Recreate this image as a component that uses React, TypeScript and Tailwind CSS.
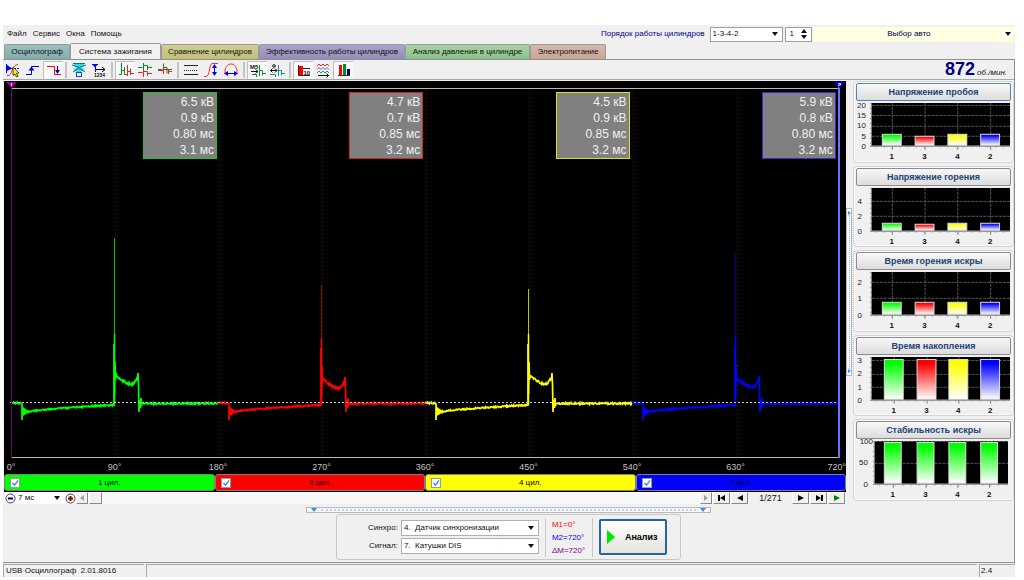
import React from 'react';

const TABS = [
  { label: 'Осциллограф', cls: 'w-[66px] bg-linear-to-b from-[#9cc0c0] to-[#7fadac]' },
  { label: 'Система зажигания', cls: 'w-[91px] bg-[#f1f1f1]', active: true },
  { label: 'Сравнение цилиндров', cls: 'w-[98px] bg-linear-to-b from-[#cfcf95] to-[#bfbf74]' },
  { label: 'Эффективность работы цилиндров', cls: 'w-[146px] bg-linear-to-b from-[#aaa4cc] to-[#938bba]' },
  { label: 'Анализ давления в цилиндре', cls: 'w-[125px] bg-linear-to-b from-[#a8d2a4] to-[#8ac389]' },
  { label: 'Электропитание', cls: 'w-[76px] bg-linear-to-b from-[#d6b9ac] to-[#c8a595]' },
];

const CYLINDERS = [
  { n: 1, color: '#00ff00', bg: 'bg-[#00ff00]', box: 'left-[16.5%] border-[#22c322]', values: ['6.5 кВ', '0.9 кВ', '0.80 мс', '3.1 мс'], top: 238, burn: 374, dim: 0.75 },
  { n: 3, color: '#ff0000', bg: 'bg-[#ff0000]', box: 'left-[41%] border-[#d22222]', values: ['4.7 кВ', '0.7 кВ', '0.85 мс', '3.2 мс'], top: 285, burn: 378, dim: 0.6 },
  { n: 4, color: '#ffff00', bg: 'bg-[#ffff00]', box: 'left-[65.5%] border-[#e0e022]', values: ['4.5 кВ', '0.9 кВ', '0.85 мс', '3.2 мс'], top: 289, burn: 374, dim: 0.75 },
  { n: 2, color: '#0000ff', bg: 'bg-[#0000ff]', box: 'left-[90%] border-[#3030c8]', values: ['5.9 кВ', '0.8 кВ', '0.80 мс', '3.2 мс'], top: 253, burn: 377, dim: 0.6 },
];

const BAR_COLORS = ['#00ff00', '#ff0000', '#ffff00', '#0000ff'];

type ChartDef = {
  title: string;
  max: number;
  ticks: number[];
  values: number[];
  colors: string[];
  left: number;
  labelX: number;
  barWidth: number;
  centers: number[];
};

const CHARTS: ChartDef[] = [
  { title: 'Напряжение пробоя', max: 21, ticks: [0, 5, 10, 15, 20], values: [6.1, 4.7, 5.7, 6], colors: BAR_COLORS, left: 16, labelX: 10, barWidth: 20, centers: [36, 69, 102, 135] },
  { title: 'Напряжение горения', max: 5.7, ticks: [0, 2, 4], values: [1.1, 0.95, 1.1, 1.1], colors: BAR_COLORS, left: 16, labelX: 6, barWidth: 20, centers: [36, 69, 102, 135] },
  { title: 'Время горения искры', max: 2.6, ticks: [0, 1, 2], values: [0.77, 0.77, 0.81, 0.77], colors: BAR_COLORS, left: 16, labelX: 6, barWidth: 20, centers: [36, 69, 102, 135] },
  { title: 'Время накопления', max: 3.25, ticks: [0, 1, 2, 3], values: [3.1, 3.12, 3.12, 3.12], colors: BAR_COLORS, left: 16, labelX: 6, barWidth: 20, centers: [38, 71, 103, 135] },
  { title: 'Стабильность искры', max: 100, ticks: [0, 50, 100], values: [98, 98, 98, 98], colors: ['#00ff00', '#00ff00', '#00ff00', '#00ff00'], left: 19, labelX: 12, barWidth: 18, centers: [37, 70, 102, 134] },
];

const noise = (i: number) => {
  const v = Math.sin(i * 12.9898) * 43758.5453;
  return v - Math.floor(v) - 0.5;
};

// One 180° section of the secondary voltage trace, starting at x0
const buildTrace = (x0: number, burn: number) => {
  const pts: string[] = [];
  const add = (x: number, y: number) => pts.push(`${(x0 + x).toFixed(1)},${y.toFixed(1)}`);
  for (let x = 0; x <= 10; x += 0.5) add(x, 403 + noise(x + 3) * 1.5);
  add(11, 404);
  add(11, 420);
  for (let x = 11.5; x < 18; x += 0.5) {
    const swing = (18 - x) * 0.7;
    add(x, 411.5 + (Math.round(x * 2) % 2 ? -swing : swing));
  }
  for (let x = 18; x <= 102; x += 0.5) {
    const t = (x - 18) / 84;
    add(x, 411.5 - 6.5 * Math.pow(t, 0.75) + noise(x + x0) * 1.4);
  }
  add(103, 405);
  add(103, burn - 30);
  add(103.5, burn + 20);
  add(104, burn - 12);
  add(104.5, burn + 6);
  for (let x = 105; x <= 126.5; x += 0.5) {
    const t = (x - 105) / 22;
    const y = t < 0.72 ? burn + 1 + 9 * Math.sin((t / 0.72) * 1.57) : burn + 10 - 7 * Math.pow((t - 0.72) / 0.28, 1.5);
    add(x, y + noise(x * 3 + x0) * 2.2);
  }
  add(127, burn - 1);
  add(127.5, burn + 10);
  add(128, 412);
  add(128.5, 400);
  add(129.5, 408);
  add(130, 398);
  add(130.5, 406);
  for (let x = 131; x <= 207; x += 0.5) add(x, 403.5 + noise(x * 2 + x0) * 1.6);
  return pts.join(' ');
};

const Arrow: React.FC<{ className?: string }> = ({ className = '' }) => (
  <svg viewBox="0 0 6 4" className={`h-1 w-[6px] ${className}`} aria-hidden="true">
    <path d="M0 0h6L3 4z" fill="currentColor" />
  </svg>
);

type SelectProps = { id: string; options: string[]; className?: string; label?: string };

const Select: React.FC<SelectProps> = ({ id, options, className = '', label }) => (
  <div className={`relative bg-white ${className}`}>
    <select id={id} aria-label={label} className="block h-full w-full appearance-none bg-transparent pr-3 pl-[2px] outline-none">
      {options.map((o) => (
        <option key={o}>{o}</option>
      ))}
    </select>
    <Arrow className="pointer-events-none absolute top-1/2 right-1 -translate-y-1/2" />
  </div>
);

const ICONS: { name: string; art: React.ReactNode; pressed?: boolean }[][] = [
  [
    {
      name: 'Курсор',
      art: (
        <>
          <path d="M2 3l5 3.500L2 9z" fill="#0000ff" />
          <path d="M1.500 2v9" stroke="#0000ff" />
          <path d="M6 6.500h8" stroke="#0000ff" strokeDasharray="2 1" />
          <path d="M2 13.500c3 .5 4-2 5-5s3-6 6-6" stroke="#ff2020" fill="none" />
          <path d="M8 5l6 6-2.500.3 1.500 3-1.500.7-1.500-3L8 13.500z" fill="#ffee00" stroke="#222" strokeWidth=".8" />
        </>
      ),
    },
    {
      name: 'Фронт',
      art: (
        <>
          <path d="M1 12.500h5.500v-8H14" stroke="#0000d8" fill="none" />
          <path d="M3.500 8.500h6l-3-4z" fill="#0000d8" />
        </>
      ),
    },
    {
      name: 'Спад',
      pressed: true,
      art: (
        <>
          <path d="M1 4.500h7.500v8H15" stroke="#ff0000" fill="none" />
          <path d="M11.500 4v5" stroke="#0000d8" />
          <path d="M9 8h5l-2.500 4z" fill="#0000d8" />
        </>
      ),
    },
  ],
  [
    {
      name: 'Датчик',
      art: (
        <>
          <path d="M2 3c3-2 9-2 12 0L10 6H6zM2 8l4-3h4l4 3-4 2H6z" fill="#30d8e0" />
          <path d="M1 3l6 2 7 5M15 3L9 5l-7 5M2 1.500h12" stroke="#007a80" fill="none" />
          <path d="M5.500 10v5M10.500 10v5M5 10.500h6M5 14.500h6" stroke="#2040e0" />
        </>
      ),
    },
    {
      name: 'Метки',
      art: (
        <>
          <path d="M1 2h6L4 5.500z" fill="#0000ff" />
          <path d="M4.500 2v8M1 2.500h6" stroke="#0000ff" />
          <path d="M5 7.500h9M11 5l3 2.500L11 10" stroke="#000" fill="none" />
          <text x="3" y="15" fontSize="5" fontWeight="bold" fill="#111">1234</text>
        </>
      ),
    },
  ],
  [
    {
      name: 'Парад',
      pressed: true,
      art: (
        <>
          <path d="M1 12.500h2.500V1V8.500h3V12.500V5" stroke="#008c20" fill="none" />
          <path d="M6.500 12.500h2.500M9.500 14V3v6.500h3V13V6.500M12.500 11.500H16" stroke="#f02020" fill="none" />
        </>
      ),
    },
    {
      name: 'Растр',
      art: (
        <>
          <path d="M1 5.500h4.500M6.500 1v8M6.500 3.500h4v4.500M10.500 5.500H15" stroke="#008c20" fill="none" />
          <path d="M1 10.500h4.500M6.500 7v8M6.500 9.500h4V14M10.500 11.500H15" stroke="#f02020" fill="none" />
        </>
      ),
    },
    {
      name: 'Наложение',
      art: (
        <>
          <path d="M1 7.500h4.500M6.500 1.500v9M6.500 5.500h3.500v6M10.500 7.500H15" stroke="#008c20" fill="none" />
          <path d="M1 8.500h5.500V4v8M6.500 7.500h5V12M11.500 9.500H15" stroke="#f02020" fill="none" />
        </>
      ),
    },
  ],
  [
    {
      name: 'Линии',
      art: (
        <>
          <path d="M1 3.500h14M1 12.500h14" stroke="#222" />
          <path d="M1 8.500h14" stroke="#222" strokeDasharray="1 1" />
        </>
      ),
    },
    {
      name: 'По амплитуде',
      art: (
        <>
          <path d="M1 14.500h2c4 0 3-12 6-13h6" stroke="#ff3030" fill="none" />
          <path d="M11.500 3v10" stroke="#0000ff" />
          <path d="M9 6l2.500-4L14 6zM9 10l2.500 4L14 10z" fill="#0000ff" />
        </>
      ),
    },
    {
      name: 'По периоду',
      art: (
        <>
          <path d="M2 12V8c1-4 3-6 6-6s5 2 6 6v4" stroke="#ff3030" fill="none" />
          <path d="M3 11.500h10" stroke="#0000ff" />
          <path d="M1 11.500L5 9v5zM15 11.500L11 9v5z" fill="#0000ff" />
        </>
      ),
    },
  ],
  [
    {
      name: 'Значения',
      pressed: true,
      art: (
        <>
          <path d="M2 12.500h4.500V15M9.500 14V3v5.500h3v5M12.500 11.500H16" stroke="#109030" fill="none" />
          <text x="0" y="7" fontSize="6" fontWeight="bold" fill="#111">M5</text>
          <path d="M1 9.500h7M5.500 7.500l2.500 2-2.500 2" stroke="#111" fill="none" />
        </>
      ),
    },
    {
      name: 'Измерение',
      art: (
        <>
          <path d="M1 12.500h5.500V15M9.500 14V3v5.500h3v5M12.500 11.500H16" stroke="#169090" fill="none" />
          <path d="M1 8.500h7M3.500 6.500l-2 2 2 2M6 6.500l2 2-2 2" stroke="#111" fill="none" />
          <circle cx="5" cy="4" r="1.300" stroke="#111" fill="none" />
        </>
      ),
    },
  ],
  [
    {
      name: 'Цифры',
      pressed: true,
      art: (
        <>
          <path d="M3 4h4v9H3z" fill="#ff0000" />
          <path d="M2.500 3v10.500H14M7 6.500h7" stroke="#222" fill="none" />
          <text x="7.500" y="12.500" fontSize="6" fontWeight="bold" fill="#111">10</text>
        </>
      ),
    },
    {
      name: 'Осциллограммы',
      art: (
        <>
          <path d="M2 4l2-2 2 2 2-2 2 2 2-2 2 2" stroke="#ff2020" fill="none" />
          <path d="M2 7.500l2-2 2 2 2-2 2 2 2-2 2 2" stroke="#6060ff" fill="none" />
          <path d="M2 11l2-2 2 2 2-2 2 2 2-2 2 2" stroke="#20a040" fill="none" />
          <path d="M3 13.500h11M11.500 11.500l2 2-2 2" stroke="#111" fill="none" />
        </>
      ),
    },
    {
      name: 'Диаграммы',
      pressed: true,
      art: (
        <>
          <path d="M3 3h3v10H3z" fill="#ff0000" />
          <path d="M7 2h3v11H7z" fill="#008c20" />
          <path d="M11 7h3v6h-3z" fill="#000080" />
          <path d="M2 13.500h12" stroke="#333" />
        </>
      ),
    },
  ],
];

const Toolbar: React.FC = () => (
  <div className="flex h-5 items-center border-b border-[#a8a8a8]">
    {ICONS.map((group, i) => (
      <React.Fragment key={i}>
        {i > 0 && <span className="mx-[2px] h-4 w-[2px] border-x border-x-[#c4c4c4] bg-white" />}
        {group.map((icon) => (
          <button
            key={icon.name}
            type="button"
            aria-label={icon.name}
            className={`flex h-[18px] w-5 items-center justify-center ${icon.pressed ? 'border-t border-l border-[#c0c0c0] bg-[#f9f9f9]' : ''}`}
          >
            <svg viewBox="0 0 16 16" className="h-4 w-4" aria-hidden="true">
              {icon.art}
            </svg>
          </button>
        ))}
      </React.Fragment>
    ))}
    <div className="ml-auto flex items-baseline gap-[2px] pr-[7px]">
      <span className="text-[18px] leading-[18px] font-bold text-[#000080]">872</span>
      <span className="italic">об./мин.</span>
    </div>
  </div>
);

const BarChart: React.FC<{ chart: ChartDef; id: number }> = ({ chart, id }) => {
  const right = chart.left === 16 ? 155 : 153;
  const y = (v: number) => 44 - (v / chart.max) * 43;
  const minor = Array.from({ length: 17 }, (_, i) => chart.left + 4 + i * 8);
  return (
    <svg viewBox="0 0 156 60" className="block w-full overflow-visible" role="img" aria-label={chart.title}>
      <defs>
        {chart.colors.map((c, i) => (
          <linearGradient key={i} id={`bar-${id}-${i}`} x1="0" y1="0" x2="0" y2="1">
            <stop offset="0.1" stopColor={c} />
            <stop offset="1" stopColor="#ffffff" />
          </linearGradient>
        ))}
      </defs>
      <rect x={chart.left} y="1" width={right - chart.left} height="43" fill="#000" />
      {chart.ticks.slice(1).map((t) => (
        <path key={t} d={`M${chart.left} ${Math.round(y(t)) + 0.5}H${right}`} stroke="#555" strokeDasharray="3 1" />
      ))}
      {chart.centers.map((c) => (
        <path key={c} d={`M${c + 0.5} 1v43`} stroke="#555" strokeDasharray="3 1" />
      ))}
      {Array.from({ length: 9 }, (_, i) => (
        <path key={i} d={`M${chart.left - 2} ${1.5 + i * 5}h2`} stroke="#999" />
      ))}
      <path d={`M${chart.left - 2} 44.500H${right}M${chart.left - 0.5} 1v43`} stroke="#777" />
      {minor.map((x) => (
        <path key={x} d={`M${x + 0.5} 45v1`} stroke="#999" />
      ))}
      {chart.centers.map((c) => (
        <path key={c} d={`M${c + 0.5} 45v3`} stroke="#777" />
      ))}
      {chart.values.map((v, i) => (
        <rect
          key={i}
          x={chart.centers[i] - chart.barWidth / 2 + 0.5}
          y={Math.round(y(v)) + 0.5}
          width={chart.barWidth - 1}
          height={43 - Math.round(y(v))}
          fill={`url(#bar-${id}-${i})`}
          stroke="#ddd"
        />
      ))}
      {chart.ticks.map((t) => (
        <text key={t} x={t === 100 ? 17 : chart.labelX} y={y(t) + 3} textAnchor="end" fontSize="8" fill="#222">
          {t}
        </text>
      ))}
      {[1, 3, 4, 2].map((n, i) => (
        <text key={n} x={chart.centers[i]} y="57" textAnchor="middle" fontSize="8" fontWeight="bold" fill="#111">
          {n}
        </text>
      ))}
    </svg>
  );
};

const Scope: React.FC = () => (
  <div className="relative flex flex-1 flex-col overflow-hidden bg-black">
    <svg viewBox="4 81 842 378" preserveAspectRatio="none" className="block h-0 min-h-[300px] w-full flex-1" role="img" aria-label="Осциллограмма">
      {[114, 218, 321, 425, 528, 632, 736].map((x) => (
        <path key={x} d={`M${x + 1}.500 89v368`} stroke="#2c2c18" strokeDasharray="1 3" />
      ))}
      <path d="M11 88.500h829M11 457.500h829" stroke="#b8b8b8" />
      {CYLINDERS.map((c, i) => {
        const x0 = 11 + i * 207;
        return (
          <g key={c.n} fill="none" stroke={c.color}>
            <path d={`M${x0 + 103.5} ${c.top}V${c.burn}`} strokeOpacity={c.dim} />
            <path d={`M${x0 + 103.5} ${c.burn - 40}V405`} strokeWidth="1.500" />
            <polyline points={buildTrace(x0, c.burn)} strokeWidth="1.700" />
          </g>
        );
      })}
      <path d="M10 402.500h830" stroke="#c8c8c8" strokeDasharray="2 2" />
      <path d="M11.500 82v376" stroke="#700070" />
      <path d="M839 82v376" stroke="#7070ff" strokeWidth="2" />
      <path d="M6 82h11l-5.500 6z" fill="#a000a0" />
      <path d="M834 82h11l-5.500 6z" fill="#0000ff" />
      <path d="M11.500 83v3M838.500 83.500h2v1.500h-2v1" stroke="#fff" fill="none" />
    </svg>
    <div className="flex h-[15px] items-center justify-between px-[7px] text-[9px] text-[#c0c0c0]">
      {[0, 90, 180, 270, 360, 450, 540, 630].map((d) => (
        <span key={d} className="flex w-0 justify-center">{d}°</span>
      ))}
      <span className="-mr-[7px] flex w-[7px] justify-end">720°</span>
    </div>
    <div className="grid h-[18px] grid-cols-4 pb-px">
      {CYLINDERS.map((c) => (
        <label key={c.n} className={`grid grid-cols-[10px_1fr_10px] items-center rounded-[3px] border border-[#808080] px-[5px] text-black ${c.bg}`}>
          <input type="checkbox" defaultChecked className="col-start-1 row-start-1 h-[10px] w-[10px] appearance-none border border-[#9a9a9a] bg-white" />
          <svg viewBox="0 0 10 10" className="pointer-events-none col-start-1 row-start-1 h-[10px] w-[10px]" aria-hidden="true">
            <path d="M2.500 5l2 2.300 3.500-5" fill="none" stroke="#2a8be8" strokeWidth="1.300" />
          </svg>
          <span className="text-center">{c.n} цил.</span>
        </label>
      ))}
    </div>
    {CYLINDERS.map((c) => (
      <div key={c.n} className={`absolute top-[11px] w-[74px] border bg-[#808080] pt-px pr-[2px] text-right text-[12px] leading-4 text-[#f0f0f0] ${c.box}`}>
        {c.values.map((v, i) => (
          <div key={i}>{v}</div>
        ))}
      </div>
    ))}
  </div>
);

const NavButton: React.FC<{ label: string; d: string; className?: string }> = ({ label, d, className = 'w-[17px] text-black' }) => (
  <button type="button" aria-label={label} className={`mr-px flex h-3 items-center justify-center border border-t-white border-r-[#888] border-b-[#888] border-l-white bg-[#f0f0f0] ${className}`}>
    <svg viewBox="0 0 10 8" className="h-2 w-[10px]" aria-hidden="true">
      <path d={d} fill="currentColor" />
    </svg>
  </button>
);

const ZoomButton: React.FC<{ label: string; d: string; color: string }> = ({ label, d, color }) => (
  <button type="button" aria-label={label} className="flex h-3 w-3 items-center justify-center">
    <svg viewBox="0 0 11 11" className="h-[11px] w-[11px]" aria-hidden="true">
      <circle cx="5.500" cy="5.500" r="4.500" fill="#fff" stroke="#444" />
      <path d={d} stroke={color} strokeWidth="2" />
    </svg>
  </button>
);

const ScrollRow: React.FC = () => (
  <div className="flex h-3 items-center bg-[#f8f8f8]">
    <ZoomButton label="Уменьшить" d="M3 5.500h5" color="#000080" />
    <Select id="sweep" label="Развёртка" options={['7 мс', '10 мс', '20 мс']} className="h-3 w-12" />
    <ZoomButton label="Увеличить" d="M3 5.500h5M5.500 3v5" color="#900000" />
    <NavButton label="Влево" d="M7 1v6L3 4z" className="w-3 text-[#a0a0a0]" />
    <div className="h-3 w-[13px] border border-t-white border-r-[#888] border-b-[#888] border-l-white bg-[#f0f0f0]" />
    <div className="flex-1" />
    <NavButton label="Вправо" d="M3 1v6l4-3z" className="w-3 text-[#a0a0a0]" />
    <NavButton label="В начало" d="M1 1h2v6H1zM8 1v6L3 4z" />
    <NavButton label="Назад" d="M8 1v6L2 4z" />
    <span className="h-3 w-[43px] bg-[#f0f0f0] text-center text-[9px] leading-3">1/271</span>
    <NavButton label="Вперёд" d="M2 1v6l6-3z" />
    <NavButton label="В конец" d="M7 1h2v6H7zM2 1v6l5-3z" />
    <NavButton label="Воспроизвести" d="M2 1v6l6-3z" className="w-[17px] text-[#008000]" />
  </div>
);

const Sidebar: React.FC = () => (
  <aside className="flex w-[161px] flex-col gap-[3px]">
    {CHARTS.map((chart, i) => (
      <section key={chart.title} className="rounded-[4px] border border-[#d4d4d4] px-[2px] shadow-[inset_0_0_0_1px_#fafafa]">
        <button
          type="button"
          className={`mt-px block h-[18px] w-full rounded-[2px] border bg-linear-to-b from-[#f8f8f8] to-[#dcdcdc] text-center text-[9px] font-bold text-[#1c4474] ${i === 0 ? 'border-[#5684b0]' : 'border-[#8c8c8c]'}`}
        >
          {chart.title}
        </button>
        <div className="pt-px">
          <BarChart chart={chart} id={i} />
        </div>
      </section>
    ))}
  </aside>
);

const App: React.FC = () => {
  return (
    <div className="flex min-h-screen flex-col bg-white pt-[25px] pr-[9px] pb-[3px] pl-[3px] font-['Liberation_Sans',Arial,sans-serif] text-[8px] leading-[12px] text-[#111]">
      <div className="flex flex-1 flex-col bg-[#f0f0f0]">
        <header className="flex h-[18px] items-center">
          <nav className="flex gap-[6px] pl-1">
            {['Файл', 'Сервис', 'Окна', 'Помощь'].map((m) => (
              <button key={m} type="button">{m}</button>
            ))}
          </nav>
          <label htmlFor="order" className="mr-[5px] ml-auto text-[#00008c]">Порядок работы цилиндров</label>
          <Select id="order" options={['1-3-4-2', '1-2-4-3']} className="h-[15px] w-[73px] border border-[#a0a0a0]" />
          <div className="ml-[2px] flex h-[15px] w-[27px] items-center border border-[#a0a0a0] bg-white">
            <input aria-label="Номер" defaultValue="1" className="w-3 flex-1 bg-transparent pl-1 outline-none" />
            <div className="flex flex-col gap-[2px] pr-1">
              <button type="button" aria-label="Больше" className="block h-1"><Arrow className="block rotate-180" /></button>
              <button type="button" aria-label="Меньше" className="block h-1"><Arrow className="block" /></button>
            </div>
          </div>
          <button type="button" className="ml-px flex h-[15px] w-[20%] items-center bg-[#ffffe1] pr-1 text-[#00004c]">
            <span className="flex-1 text-center">Выбор авто</span>
            <Arrow />
          </button>
        </header>

        <div role="tablist" className="flex h-4 items-end pl-px">
          {TABS.map((t) => (
            <button
              key={t.label}
              type="button"
              role="tab"
              aria-selected={!!t.active}
              className={`rounded-t-[2px] border border-b-0 border-[#9a9a9a] text-center whitespace-nowrap ${t.active ? 'h-4' : 'h-[15px]'} ${t.cls}`}
            >
              {t.label}
            </button>
          ))}
        </div>

        <main className="flex flex-1 flex-col border-t border-r border-b border-[#909090]">
          <Toolbar />
          <div className="flex flex-1 pt-px">
            <div className="flex flex-1 flex-col pl-px">
              <Scope />
              <ScrollRow />
            </div>
            <div className="flex w-[7px] flex-col justify-center pr-px">
              <div className="mb-[2px] flex h-[168px] flex-col items-center justify-between border border-[#b8b8b8] bg-[#f8f8f8] py-[2px]">
                <svg viewBox="0 0 3 4" className="h-1 w-[3px]" aria-hidden="true"><path d="M0 0v4l3-2z" fill="#3090f0" /></svg>
                <div className="w-0 flex-1 border-l border-dotted border-[#90bcec]" />
                <svg viewBox="0 0 3 4" className="h-1 w-[3px]" aria-hidden="true"><path d="M0 0v4l3-2z" fill="#3090f0" /></svg>
              </div>
            </div>
            <Sidebar />
          </div>

          <div className="flex flex-col items-center pt-[3px] pb-[2px]">
            <div className="flex h-[6px] w-2/5 items-center gap-1 border border-[#b8b8b8] bg-[#f8f8f8] px-1 text-[#3090f0]">
              <Arrow />
              <div className="h-0 flex-1 border-t-2 border-dotted border-[#b4d2f2]" />
              <Arrow />
            </div>
            <div className="mt-px flex h-[46px] items-center rounded-[3px] border border-[#c8c8c8] pr-[13px] pl-[31px]">
              <div className="grid grid-cols-[auto_138px] items-center gap-x-[3px] gap-y-[2px]">
                <label htmlFor="sync" className="text-right">Синхро:</label>
                <Select id="sync" options={['4.\u00a0 Датчик синхронизации']} className="h-4 border border-[#b0b0b0]" />
                <label htmlFor="signal" className="text-right">Сигнал:</label>
                <Select id="signal" options={['7.\u00a0 Катушки DIS']} className="h-4 border border-[#b0b0b0]" />
              </div>
              <div className="mx-[6px] w-12 border-x border-[#c8c8c8] pl-[6px] leading-[13px]">
                <div className="text-[#ff0000]">M1=0°</div>
                <div className="text-[#0000ff]">M2=720°</div>
                <div className="text-[#800080]">ΔM=720°</div>
              </div>
              <button
                type="button"
                className="flex h-9 w-[68px] items-center rounded-[2px] border-2 border-[#2c62a0] bg-linear-to-b from-white to-[#e4e4dc] pl-[6px] text-[9px] font-bold text-black"
              >
                <svg viewBox="0 0 8 14" className="mr-[10px] h-[14px] w-2" aria-hidden="true">
                  <path d="M0 0v14l8-7z" fill="#00e600" />
                </svg>
                Анализ
              </button>
            </div>
          </div>
        </main>

        <footer className="flex h-[14px] gap-[2px] pt-px">
          <div className="w-[141px] border-t border-l border-[#a8a8a8] pl-[2px]">USB Осциллограф&nbsp; 2.01.8016</div>
          <div className="flex-1 border-t border-l border-[#a8a8a8]" />
          <div className="w-9 border-t border-l border-[#a8a8a8] pl-px">2.4</div>
        </footer>
      </div>
    </div>
  );
};

export default App;
